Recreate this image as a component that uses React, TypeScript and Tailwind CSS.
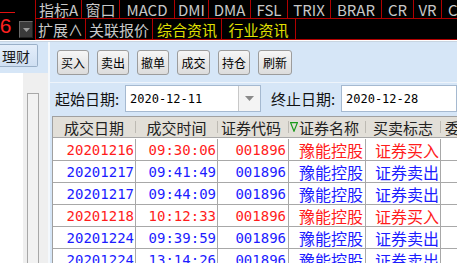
import React from "react";

const cjk = { fontFamily: '"Noto Sans CJK SC", "Liberation Sans", sans-serif' };
const mono = { fontFamily: '"DejaVu Sans Mono", "Noto Sans CJK SC", monospace' };

const topRow1 = [
  { label: "指标A", w: "w-[46px]" },
  { label: "窗口", w: "w-[38px]" },
  { label: "MACD", w: "w-[55px]" },
  { label: "DMI", w: "w-[34px]" },
  { label: "DMA", w: "w-[42px]" },
  { label: "FSL", w: "w-[37px]" },
  { label: "TRIX", w: "w-[43px]" },
  { label: "BRAR", w: "w-[51px]" },
  { label: "CR", w: "w-[32px]" },
  { label: "VR", w: "w-[28px]" },
  { label: "CYC", w: "w-[40px]" },
];

const topRow2 = [
  { label: "扩展∧", w: "w-[50px]", yellow: false },
  { label: "关联报价", w: "w-[67px]", yellow: false },
  { label: "综合资讯", w: "w-[69px]", yellow: true },
  { label: "行业资讯", w: "w-[74px]", yellow: true },
];

const trades = [
  { date: "20201216", time: "09:30:06", buy: true },
  { date: "20201217", time: "09:41:49", buy: false },
  { date: "20201217", time: "09:44:09", buy: false },
  { date: "20201218", time: "10:12:33", buy: true },
  { date: "20201224", time: "09:39:59", buy: false },
  { date: "20201224", time: "13:14:26", buy: false },
];

const cols = "grid grid-cols-[83px_82px_71px_77px_75px_1fr]";

const Btn = ({ label, w = "w-[32px]" }: { label: string; w?: string }) => (
  <button
    className={`${w} h-[25px] flex items-center justify-center rounded-[3px] border border-[#9c9c9c] bg-gradient-to-b from-[#f6f6f6] to-[#dcdcdc] text-[12px] leading-none text-black`}
    style={cjk}
  >
    {label}
  </button>
);

const DateBox = ({ value, dropdown }: { value: string; dropdown?: boolean }) => (
  <div className="flex h-[27px] bg-white border border-[#a5b9d0]">
    <div className="flex items-center pl-[4px] text-[12px] leading-none text-black" style={mono}>
      {value}
    </div>
    {dropdown && (
      <div className="ml-auto w-[22px] border-l border-[#c8c8c8] bg-[#f4f4f4] flex items-center justify-center">
        <svg width="9" height="5" viewBox="0 0 9 5">
          <path d="M0 0h9L4.5 5z" fill="#8a8a8a" />
        </svg>
      </div>
    )}
  </div>
);

const hcell = "h-[12px] flex items-center whitespace-nowrap leading-none";

export default function App() {
  return (
    <div className="w-[457px] h-[263px] overflow-hidden flex flex-col bg-[#d6e6f7]">
      {/* top black toolbar */}
      <div className="h-[40px] bg-black flex shrink-0">
        <div className="w-[35px] shrink-0 flex flex-col overflow-hidden">
          <div className="h-[13px] w-[15px] border-b border-[#e01010]" />
          <div className="flex items-start">
            <span
              className="ml-[-12px] mt-[2px] text-[21px] leading-[21px] text-[#ff2020]"
              style={{ fontFamily: '"Liberation Sans", sans-serif' }}
            >
              56
            </span>
            <div className="ml-[8px] mt-[8px] w-[14px] h-[17px] bg-[#3a3a3a] border-t border-l border-[#6a6a6a] border-r border-b border-r-[#202020] border-b-[#202020] flex items-center justify-center">
              <svg width="7" height="4" viewBox="0 0 7 4">
                <path d="M0 0h7L3.5 4z" fill="#9a9a9a" />
              </svg>
            </div>
          </div>
        </div>
        <div className="flex-1 flex flex-col border-l border-[#b00000] overflow-hidden">
          <div className="h-[19px] flex border-b border-[#b00000]">
            {topRow1.map((c) => (
              <div
                key={c.label}
                className={`${c.w} shrink-0 border-r border-[#b00000] flex items-center justify-center text-[15px] leading-none whitespace-nowrap text-[#c8c8c8]`}
                style={cjk}
              >
                {c.label}
              </div>
            ))}
          </div>
          <div className="h-[21px] flex border-b border-[#b00000]">
            {topRow2.map((c) => (
              <div
                key={c.label}
                className={`${c.w} shrink-0 border-r border-[#b00000] flex items-center justify-center text-[15px] leading-none whitespace-nowrap ${
                  c.yellow ? "text-[#e0e000]" : "text-[#c8c8c8]"
                }`}
                style={cjk}
              >
                {c.label}
              </div>
            ))}
          </div>
        </div>
      </div>
      <div className="h-[1px] bg-white shrink-0" />
      <div className="h-[1px] bg-[#c8d4e0] shrink-0" />

      {/* body */}
      <div className="flex-1 flex min-h-0">
        {/* left side panel */}
        <div className="w-[48px] shrink-0 flex flex-col">
          <div
            className="mt-[2px] w-[38px] h-[23px] flex items-center justify-end pr-[7px] border border-l-0 border-[#9ab0c8] rounded-r-[2px] bg-gradient-to-b from-[#e4eefa] to-[#cfdff2] text-[14px] leading-none text-[#1a1a1a]"
            style={cjk}
          >
            理财
          </div>
          <div className="mt-[6px] flex-1 flex">
            <div className="w-[23px] bg-white" />
            <div className="flex-1 bg-[#efefef] pl-[4px] pt-[20px]">
              <div className="w-[12px] h-full border border-b-0 border-[#a8a8a8] bg-[#f2f2f2]" />
            </div>
          </div>
        </div>
        <div className="w-[2px] shrink-0 bg-[#f4f8fc]" />

        {/* main panel */}
        <div className="flex-1 flex flex-col min-w-0">
          <div className="h-[40px] flex items-start gap-[8px] pl-[7px] pt-[8px] shrink-0">
            <Btn label="买入" />
            <Btn label="卖出" />
            <Btn label="撤单" />
            <Btn label="成交" w="w-[33px]" />
            <Btn label="持仓" />
            <Btn label="刷新" w="w-[34px]" />
          </div>
          <div className="h-[1px] bg-[#eef4fb] shrink-0" />
          <div className="h-[31px] flex items-center shrink-0 pl-[5px]">
            <span className="text-[15px] leading-none text-[#111] w-[70px]" style={cjk}>
              起始日期:
            </span>
            <div className="w-[136px]">
              <DateBox value="2020-12-11" dropdown />
            </div>
            <span className="ml-[10px] text-[15px] leading-none text-[#111] w-[70px]" style={cjk}>
              终止日期:
            </span>
            <div className="flex-1">
              <DateBox value="2020-12-28" />
            </div>
          </div>

          {/* table */}
          <div className="ml-[2px] mt-[2px] flex-1 bg-white border-t border-l border-[#a0a0a0] overflow-hidden">
            <div
              className={`${cols} h-[21px] items-center bg-[#e2dfd8] border-b border-[#a8a8a8] text-[15px] text-[#222]`}
              style={cjk}
            >
              <div className={`${hcell} justify-center border-r border-[#bdbab3]`}>成交日期</div>
              <div className={`${hcell} justify-center border-r border-[#bdbab3]`}>成交时间</div>
              <div className={`${hcell} pl-[3px] border-r border-[#bdbab3]`}>证券代码</div>
              <div className={`${hcell} pl-[1px] border-r border-[#bdbab3]`}>
                <svg width="8" height="10" viewBox="0 0 8 10" className="mr-[1px]">
                  <path d="M0.6 0.6h6.8L4 9.2z" fill="none" stroke="#1a9a1a" strokeWidth="1.2" />
                </svg>
                证券名称
              </div>
              <div className={`${hcell} justify-center border-r border-[#bdbab3]`}>买卖标志</div>
              <div className={`${hcell} pl-[4px]`}>委托</div>
            </div>
            <div className="h-[1px] bg-white" />
            {trades.map((r, i) => {
              const color = r.buy ? "text-[#ff1c1c]" : "text-[#1c1cff]";
              return (
                <div key={i} className={`${cols} h-[22px] border-b border-[#a8a8a8] ${color}`}>
                  <div className="flex items-center justify-end pr-[1px] border-r border-[#a8a8a8] text-[14px] leading-none" style={mono}>
                    {r.date}
                  </div>
                  <div className="flex items-center justify-end pr-[1px] border-r border-[#a8a8a8] text-[14px] leading-none" style={mono}>
                    {r.time}
                  </div>
                  <div className="flex items-center justify-end pr-[2px] border-r border-[#a8a8a8] text-[14px] leading-none" style={mono}>
                    001896
                  </div>
                  <div className="flex items-center justify-end pr-[2px] border-r border-[#a8a8a8] text-[16px] leading-none" style={cjk}>
                    豫能控股
                  </div>
                  <div className="flex items-center justify-end pr-[1px] border-r border-[#a8a8a8] text-[16px] leading-none" style={cjk}>
                    {r.buy ? "证券买入" : "证券卖出"}
                  </div>
                  <div />
                </div>
              );
            })}
          </div>
        </div>
      </div>
    </div>
  );
}
